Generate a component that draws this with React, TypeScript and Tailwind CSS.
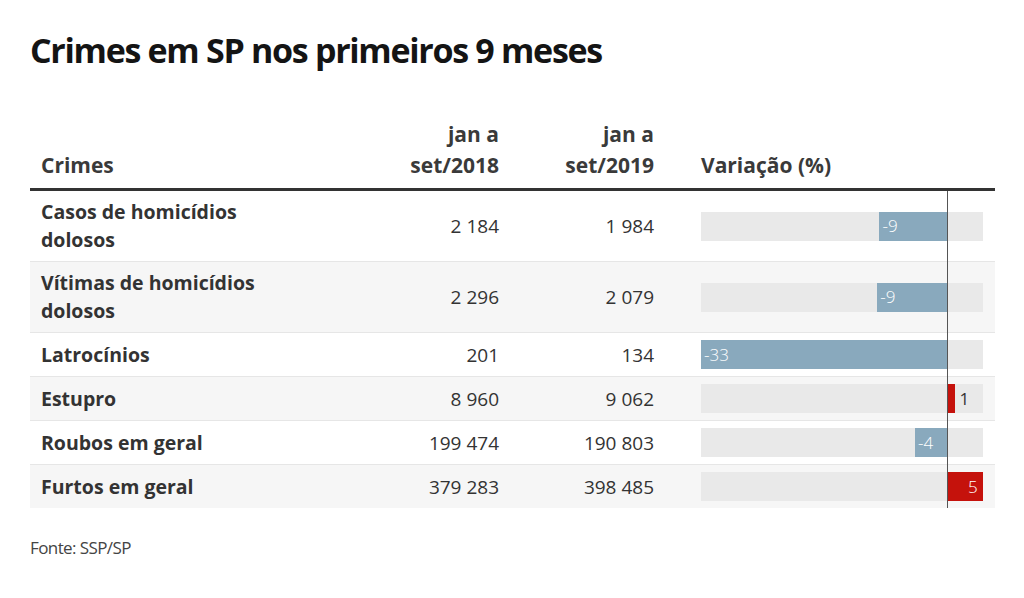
const rows = [
  { name: ['Casos de homicídios', 'dolosos'], a: 2184, b: 1984 },
  { name: ['Vítimas de homicídios', 'dolosos'], a: 2296, b: 2079 },
  { name: ['Latrocínios'], a: 201, b: 134 },
  { name: ['Estupro'], a: 8960, b: 9062 },
  { name: ['Roubos em geral'], a: 199474, b: 190803 },
  { name: ['Furtos em geral'], a: 379283, b: 398485 },
];

// px per percentage point, zero line sits 246px into the track
const SCALE = 246 / 33.33;
const ZERO = 246;

function fmt(n: number) {
  return n.toString().replace(/\B(?=(\d{3})+(?!\d))/g, ' ');
}

function Bar({ a, b }: { a: number; b: number }) {
  const pct = ((b - a) / a) * 100;
  const label = Math.round(pct);
  const w = Math.min(Math.abs(pct) * SCALE, neg(pct) ? ZERO : 36);
  const isNeg = neg(pct);
  const small = w < 20;
  return (
    <div className="relative w-[282px] h-[29px] bg-[#e9e9e9]">
      <div
        className={`absolute top-0 h-full ${isNeg ? 'bg-[#89a9bd]' : 'bg-[#c5120c]'}`}
        style={isNeg ? { left: ZERO - w, width: w } : { left: ZERO, width: w }}
      />
      {isNeg && (
        <span className="absolute top-0 h-full flex items-center text-[17px] font-light text-white" style={{ left: ZERO - w + 3 }}>
          {label}
        </span>
      )}
      {!isNeg && small && (
        <span className="absolute top-0 h-full flex items-center text-[17px] text-[#333]" style={{ left: ZERO + w + 4 }}>
          {label}
        </span>
      )}
      {!isNeg && !small && (
        <span className="absolute top-0 h-full flex items-center text-[17px] font-light text-white" style={{ left: ZERO + w - 15 }}>
          {label}
        </span>
      )}
    </div>
  );
}

function neg(p: number) {
  return p < 0;
}

export default function App() {
  return (
    <div className="w-[1024px] h-[598px] bg-white text-[#333] font-['Open_Sans',sans-serif]">
      <div className="pl-[30px] pr-[29px] pt-[27px]">
        <h1 className="text-[34px] leading-[46px] font-bold tracking-[-1.3px] text-[#141414]">
          Crimes em SP nos primeiros 9 meses
        </h1>

        {/* header */}
        <div className="mt-[46px] flex items-end pl-[11px] pb-[7px] border-b-[3px] border-[#333] text-[21px] leading-[31px] font-bold text-[#3a3a3a]">
          <div className="w-[300px]">Crimes</div>
          <div className="w-[158px] text-right">jan a<br />set/2018</div>
          <div className="w-[155px] text-right">jan a<br />set/2019</div>
          <div className="pl-[47px]">Variação (%)</div>
        </div>

        {/* body */}
        <div className="relative">
          {rows.map((r, i) => (
            <div
              key={i}
              className={`flex items-center pl-[11px] py-[7px] text-[19px] leading-[28px] ${i < rows.length - 1 ? 'border-b border-[#e6e6e6]' : ''} ${i % 2 === 1 ? 'bg-[#f6f6f6]' : 'bg-white'}`}
            >
              <div className="w-[300px] text-[19.5px] font-bold text-[#333]">
                {r.name.map((l, j) => <div key={j}>{l}</div>)}
              </div>
              <div className="w-[158px] text-right">{fmt(r.a)}</div>
              <div className="w-[155px] text-right">{fmt(r.b)}</div>
              <div className="pl-[47px]">
                <Bar a={r.a} b={r.b} />
              </div>
            </div>
          ))}
          <div className="absolute left-[917px] top-0 bottom-0 w-px bg-[#555]" />
        </div>

        <p className="mt-[27px] text-[17px] tracking-[-0.6px] text-[#444]">Fonte: SSP/SP</p>
      </div>
    </div>
  );
}
